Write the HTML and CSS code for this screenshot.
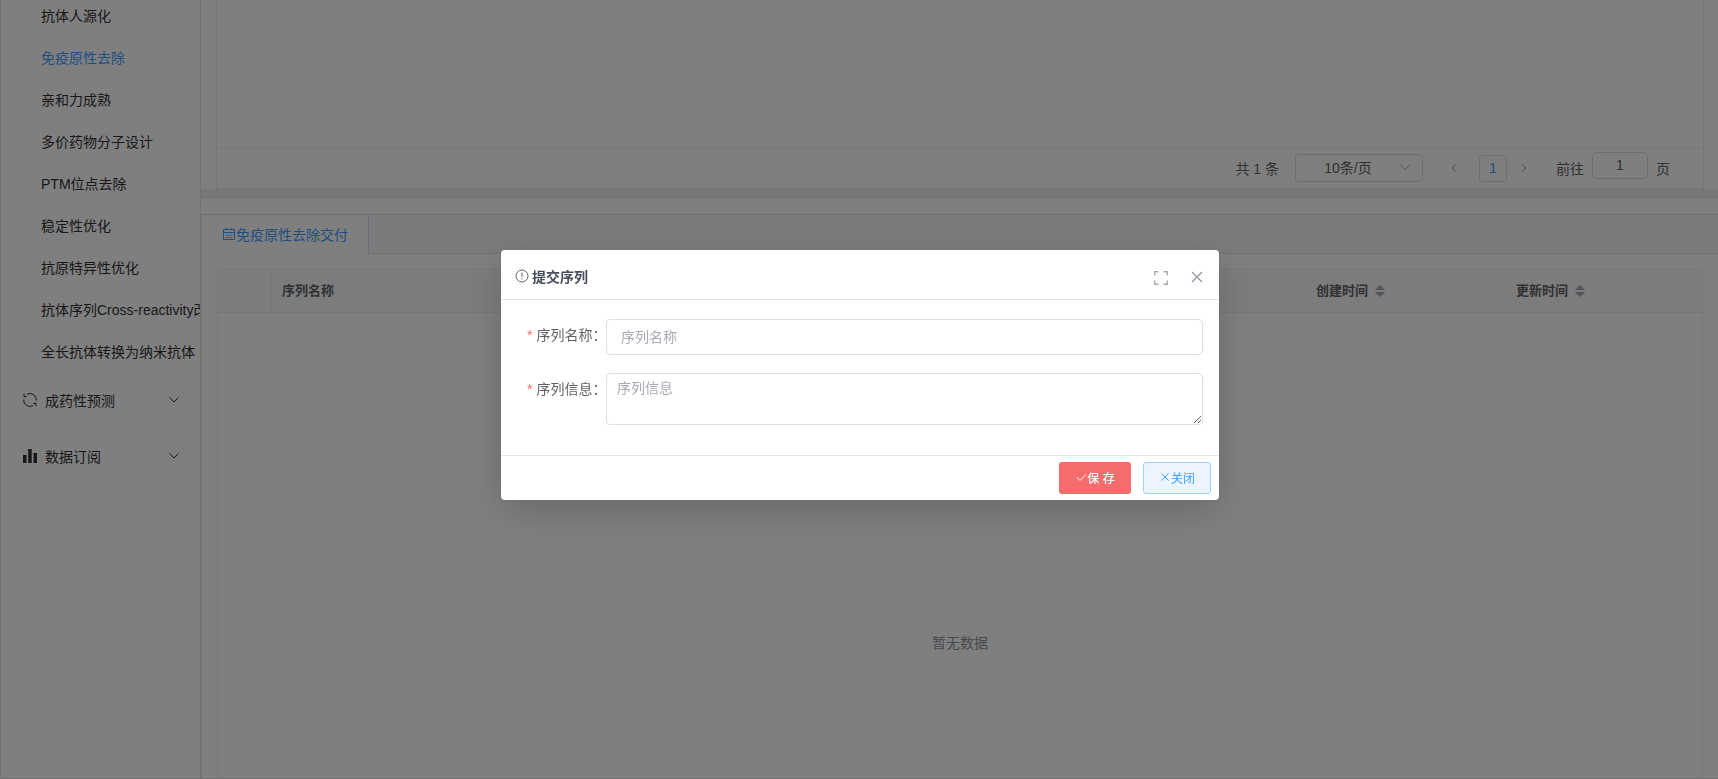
FILE: index.html
```html
<!DOCTYPE html>
<html lang="zh-CN">
<head>
<meta charset="utf-8">
<title>免疫原性去除</title>
<link rel="stylesheet" href="styles.css">
</head>
<body>
<div class="app">
  <nav class="sidebar">
    <ul class="menu">
      <li><a class="menu-item" href="#">抗体人源化</a></li>
      <li><a class="menu-item active" href="#">免疫原性去除</a></li>
      <li><a class="menu-item" href="#">亲和力成熟</a></li>
      <li><a class="menu-item" href="#">多价药物分子设计</a></li>
      <li><a class="menu-item" href="#">PTM位点去除</a></li>
      <li><a class="menu-item" href="#">稳定性优化</a></li>
      <li><a class="menu-item" href="#">抗原特异性优化</a></li>
      <li><a class="menu-item" href="#">抗体序列Cross-reactivity改造</a></li>
      <li><a class="menu-item" href="#">全长抗体转换为纳米抗体</a></li>
    </ul>
    <button class="submenu" type="button">
      <svg class="submenu-icon" viewBox="0 0 16 16" fill="none" stroke="currentColor"><path d="M5 2.300A6.300 6.300 0 0 1 14.300 8.500M11 13.700A6.300 6.300 0 0 1 1.700 7.500M2.200 5.500A6.300 6.300 0 0 1 3 4.100M13.800 10.500a6.300 6.300 0 0 1-.8 1.400M2 1.800v2.700h2.700M14 14.200v-2.700h-2.700"/></svg>
      <span class="submenu-label">成药性预测</span>
      <svg class="chevron" viewBox="0 0 10 10" fill="none" stroke="currentColor"><path d="M.5 2.500 5 7l4.500-4.500"/></svg>
    </button>
    <button class="submenu" type="button">
      <svg class="submenu-icon" viewBox="0 0 16 16" fill="currentColor"><path d="M1 7h3.500v8H1zM6.200 1h3.500v14H6.200zM11.500 5H15v10h-3.500z"/></svg>
      <span class="submenu-label">数据订阅</span>
      <svg class="chevron" viewBox="0 0 10 10" fill="none" stroke="currentColor"><path d="M.5 2.500 5 7l4.500-4.500"/></svg>
    </button>
  </nav>

  <main class="main">
    <section class="upper">
      <div class="upper-body"></div>
      <div class="pagination">
        <span class="total">共 1 条</span>
        <span class="size">
          <select class="size-select" aria-label="每页条数"><option>10条/页</option></select>
          <svg class="size-arrow" viewBox="0 0 12 12" fill="none" stroke="currentColor"><path d="M1 3.500 6 8.500l5-5"/></svg>
        </span>
        <button class="pager-arrow" type="button" aria-label="上一页"><svg viewBox="0 0 10 10" fill="none" stroke="currentColor"><path d="M7.500 1 3 5l4.500 4"/></svg></button>
        <button class="pager-number" type="button">1</button>
        <button class="pager-arrow" type="button" aria-label="下一页"><svg viewBox="0 0 10 10" fill="none" stroke="currentColor"><path d="M2.500 1 7 5 2.500 9"/></svg></button>
        <label class="jump" for="jump">前往</label>
        <input class="jump-input" id="jump" type="text" value="1">
        <span class="jump-unit">页</span>
      </div>
    </section>

    <section class="lower">
      <div class="tabs" role="tablist">
        <button class="tab" type="button" role="tab" aria-selected="true">
          <svg class="tab-icon" viewBox="0 0 14 14" fill="none" stroke="currentColor"><path d="M1.500 2.500h11v10h-11zM1.500 5.500h11M4.500 1v2M9.500 1v2"/><path d="M3.500 8h2M6 8h2M8.500 8h2M3.500 10.500h2M6 10.500h2M8.500 10.500h2" stroke-width=".8"/></svg>免疫原性去除交付
        </button>
      </div>
      <div class="table-box">
        <table class="grid">
          <colgroup><col class="col-index"><col><col class="col-time"><col class="col-time"></colgroup>
          <thead>
            <tr>
              <th></th>
              <th>序列名称</th>
              <th class="time">创建时间<svg class="sort" viewBox="0 0 10 12"><path d="M0 5 5 0l5 5zM0 7h10l-5 5z"/></svg></th>
              <th class="time">更新时间<svg class="sort" viewBox="0 0 10 12"><path d="M0 5 5 0l5 5zM0 7h10l-5 5z"/></svg></th>
            </tr>
          </thead>
        </table>
        <div class="empty">暂无数据</div>
      </div>
    </section>
  </main>
</div>

<div class="overlay">
  <form class="dialog" role="dialog" aria-labelledby="dialog-title">
    <header class="dialog-header">
      <svg class="info" viewBox="0 0 14 14" fill="none" stroke="currentColor"><circle cx="7" cy="7" r="6"/><path d="M7 3.500v4.500M7 9.300v1.200"/></svg>
      <h2 class="dialog-title" id="dialog-title">提交序列</h2>
      <button class="tool tool-full" type="button" aria-label="全屏"><svg viewBox="0 0 14 14" fill="none" stroke="currentColor" stroke-width="1.400"><path d="M.7 4.500V.7h3.800M9.500.7h3.800v3.800M13.300 9.500v3.800H9.500M4.500 13.300H.7V9.500"/></svg></button>
      <button class="tool" type="button" aria-label="关闭窗口"><svg viewBox="0 0 14 14" fill="none" stroke="currentColor" stroke-width="1.200"><path d="m2 1 10 10M12 1 2 11"/></svg></button>
    </header>
    <div class="dialog-body">
      <label class="label" for="name">序列名称：</label>
      <input class="field field-input" id="name" type="text" placeholder="序列名称">
      <label class="label" for="info">序列信息：</label>
      <textarea class="field field-area" id="info" placeholder="序列信息"></textarea>
    </div>
    <footer class="dialog-footer">
      <button class="btn btn-save" type="button"><svg viewBox="0 0 12 12" fill="none" stroke="currentColor"><path d="m1.500 6 3.500 3.500L11 3.500"/></svg>保 存</button>
      <button class="btn btn-close" type="button"><svg viewBox="0 0 12 12" fill="none" stroke="currentColor"><path d="m2.500 2.500 7 7M9.500 2.500l-7 7"/></svg>关闭</button>
    </footer>
  </form>
</div>
</body>
</html>
```

FILE: styles.css
```css
* {
  box-sizing: border-box;
}

body,
button,
input,
select,
textarea {
  font-family: "Liberation Sans", "Noto Sans CJK SC", sans-serif;
  font-size: 14px;
}

body {
  margin: 0;
  color: #606266;
  background: #fff;
}

button {
  padding: 0;
  border: 0;
  background: none;
  color: inherit;
}

svg {
  flex: none;
}

.app {
  display: flex;
  height: 100vh;
  overflow: hidden;
  border-left: 1px solid #e6e6e6;
  border-bottom: 1px solid #e6e6e6;
}

/* Sidebar */
.sidebar {
  flex: none;
  width: 200px;
  overflow: hidden;
  border-right: 1px solid #e6e6e6;
  color: #303133;
}

.menu {
  margin: -5px 0 0;
  padding: 0;
  list-style: none;
}

.menu-item {
  display: block;
  padding-left: 40px;
  line-height: 42px;
  white-space: nowrap;
  color: inherit;
  text-decoration: none;
}

.menu-item.active {
  color: #409eff;
}

.submenu {
  display: flex;
  align-items: center;
  width: 100%;
  height: 56px;
  padding: 0 21px 2px;
}

.submenu-icon {
  width: 16px;
  height: 16px;
}

.submenu-label {
  flex: 1;
  margin-left: 7px;
  text-align: left;
}

.chevron {
  width: 10px;
  height: 10px;
}

/* Content */
.main {
  display: flex;
  flex: 1;
  flex-direction: column;
  min-width: 0;
}

.upper {
  flex: none;
  margin: 0 14px 0 15px;
  border: solid #ebeef5;
  border-width: 0 1px 1px;
}

.upper-body {
  height: 147px;
}

.pagination {
  display: flex;
  align-items: center;
  justify-content: flex-end;
  height: 41px;
  padding-right: 33px;
  border-top: 1px solid #ebeef5;
}

.size {
  position: relative;
  margin: 0 20px 0 16px;
}

.size-select {
  display: block;
  width: 128px;
  height: 28px;
  padding: 0 22px 0 0;
  border: 1px solid #dcdfe6;
  border-radius: 4px;
  background: #fff;
  color: #606266;
  text-align: center;
  text-align-last: center;
  appearance: none;
}

.size-arrow {
  position: absolute;
  top: 7px;
  right: 12px;
  width: 12px;
  height: 12px;
  color: #a8abb2;
}

.pager-arrow {
  display: flex;
  align-items: center;
  justify-content: center;
  width: 22px;
  height: 28px;
  color: #909399;
}

.pager-arrow svg {
  width: 10px;
  height: 10px;
}

.pager-number {
  width: 28px;
  height: 27px;
  margin: 0 6px 0 14px;
  border: 1px solid #dcdfe6;
  border-radius: 4px;
  color: #409eff;
}

.jump {
  margin-left: 21px;
}

.jump-input {
  width: 56px;
  height: 27px;
  margin: 0 8px 6px;
  padding: 0;
  border: 1px solid #dcdfe6;
  border-radius: 4px;
  color: #606266;
  text-align: center;
}

.lower {
  display: flex;
  flex: 1;
  flex-direction: column;
  padding-top: 15px;
  border-top: 10px solid #eee;
}

.tabs {
  display: flex;
  height: 40px;
  border: solid #dcdfe6;
  border-width: 1px 0 1px 1px;
  background: #f5f7fa;
}

.tab {
  display: flex;
  align-items: center;
  height: 39px;
  padding: 0 20px 2px;
  border-right: 1px solid #dcdfe6;
  background: #fff;
  color: #409eff;
}

.tab-icon {
  width: 14px;
  height: 14px;
}

.table-box {
  display: flex;
  flex: 1;
  flex-direction: column;
  padding: 15px 15px 0;
  border-left: 1px solid #dcdfe6;
}

.grid {
  width: 100%;
  border: 1px solid #ebeef5;
  border-spacing: 0;
  table-layout: fixed;
  background: #f8f8f9;
}

.col-index {
  width: 54px;
}

.col-time {
  width: 200px;
}

.grid th {
  height: 42px;
  padding: 0 10px 4px;
  border-right: 1px solid #ebeef5;
  color: #606266;
  font-size: 13px;
  text-align: left;
}

.grid th.time {
  padding-left: 14px;
}

.grid th:last-child {
  border-right: 0;
}

.sort {
  width: 10px;
  height: 12px;
  margin-left: 7px;
  vertical-align: -2px;
  fill: #a8abb2;
}

.empty {
  display: flex;
  flex: 1;
  align-items: center;
  justify-content: center;
  padding-top: 192px;
  border: solid #ebeef5;
  border-width: 0 1px;
  color: #909399;
}

/* Dialog */
.overlay {
  position: fixed;
  inset: 0;
  padding: 250px 16px 0 18px;
  background: rgba(0, 0, 0, 0.5);
}

.dialog {
  max-width: 718px;
  margin: 0 auto;
  border-radius: 4px;
  background: #fff;
  box-shadow: 0 10px 36px rgba(0, 0, 0, 0.18);
}

.dialog-header {
  display: flex;
  align-items: center;
  height: 50px;
  padding: 2px 15px 0 14px;
  border-bottom: 1px solid #e4e4e4;
}

.info {
  width: 14px;
  height: 14px;
}

.dialog-title {
  flex: 1;
  margin: 0 0 0 3px;
  color: #464c5b;
  font-size: 14px;
}

.tool {
  display: flex;
  margin: 4px 0 0 22px;
  color: #909399;
}

.tool-full {
  color: #a8abb2;
}

.tool svg {
  width: 14px;
  height: 14px;
}

.dialog-body {
  display: grid;
  grid-template-columns: 105px 1fr;
  row-gap: 18px;
  padding: 19px 16px 30px 0;
}

.label {
  padding-left: 26px;
  line-height: 32px;
  white-space: nowrap;
}

.label::before {
  content: "*";
  margin-right: 4px;
  color: #f56c6c;
}

.field {
  display: block;
  width: 100%;
  border: 1px solid #dcdfe6;
  border-radius: 4px;
  color: #606266;
}

.field::placeholder {
  color: #a8abb2;
}

.field-input {
  height: 36px;
  padding: 0 14px;
}

.field-area {
  height: 52px;
  padding: 4px 10px;
  line-height: 20px;
  resize: vertical;
}

.dialog-footer {
  display: flex;
  justify-content: flex-end;
  gap: 12px;
  padding: 6px 8px;
  border-top: 1px solid #e4e4e4;
}

.btn {
  display: flex;
  align-items: center;
  justify-content: center;
  height: 32px;
  padding-bottom: 2px;
  border-radius: 3px;
  font-size: 12px;
}

.btn svg {
  width: 12px;
  height: 12px;
}

.btn-save {
  width: 72px;
  background: #f56c6c;
  color: #fff;
  font-weight: 500;
}

.btn-close {
  width: 68px;
  border: 1px solid #a0cfff;
  background: #ecf5ff;
  color: #409eff;
}
```
